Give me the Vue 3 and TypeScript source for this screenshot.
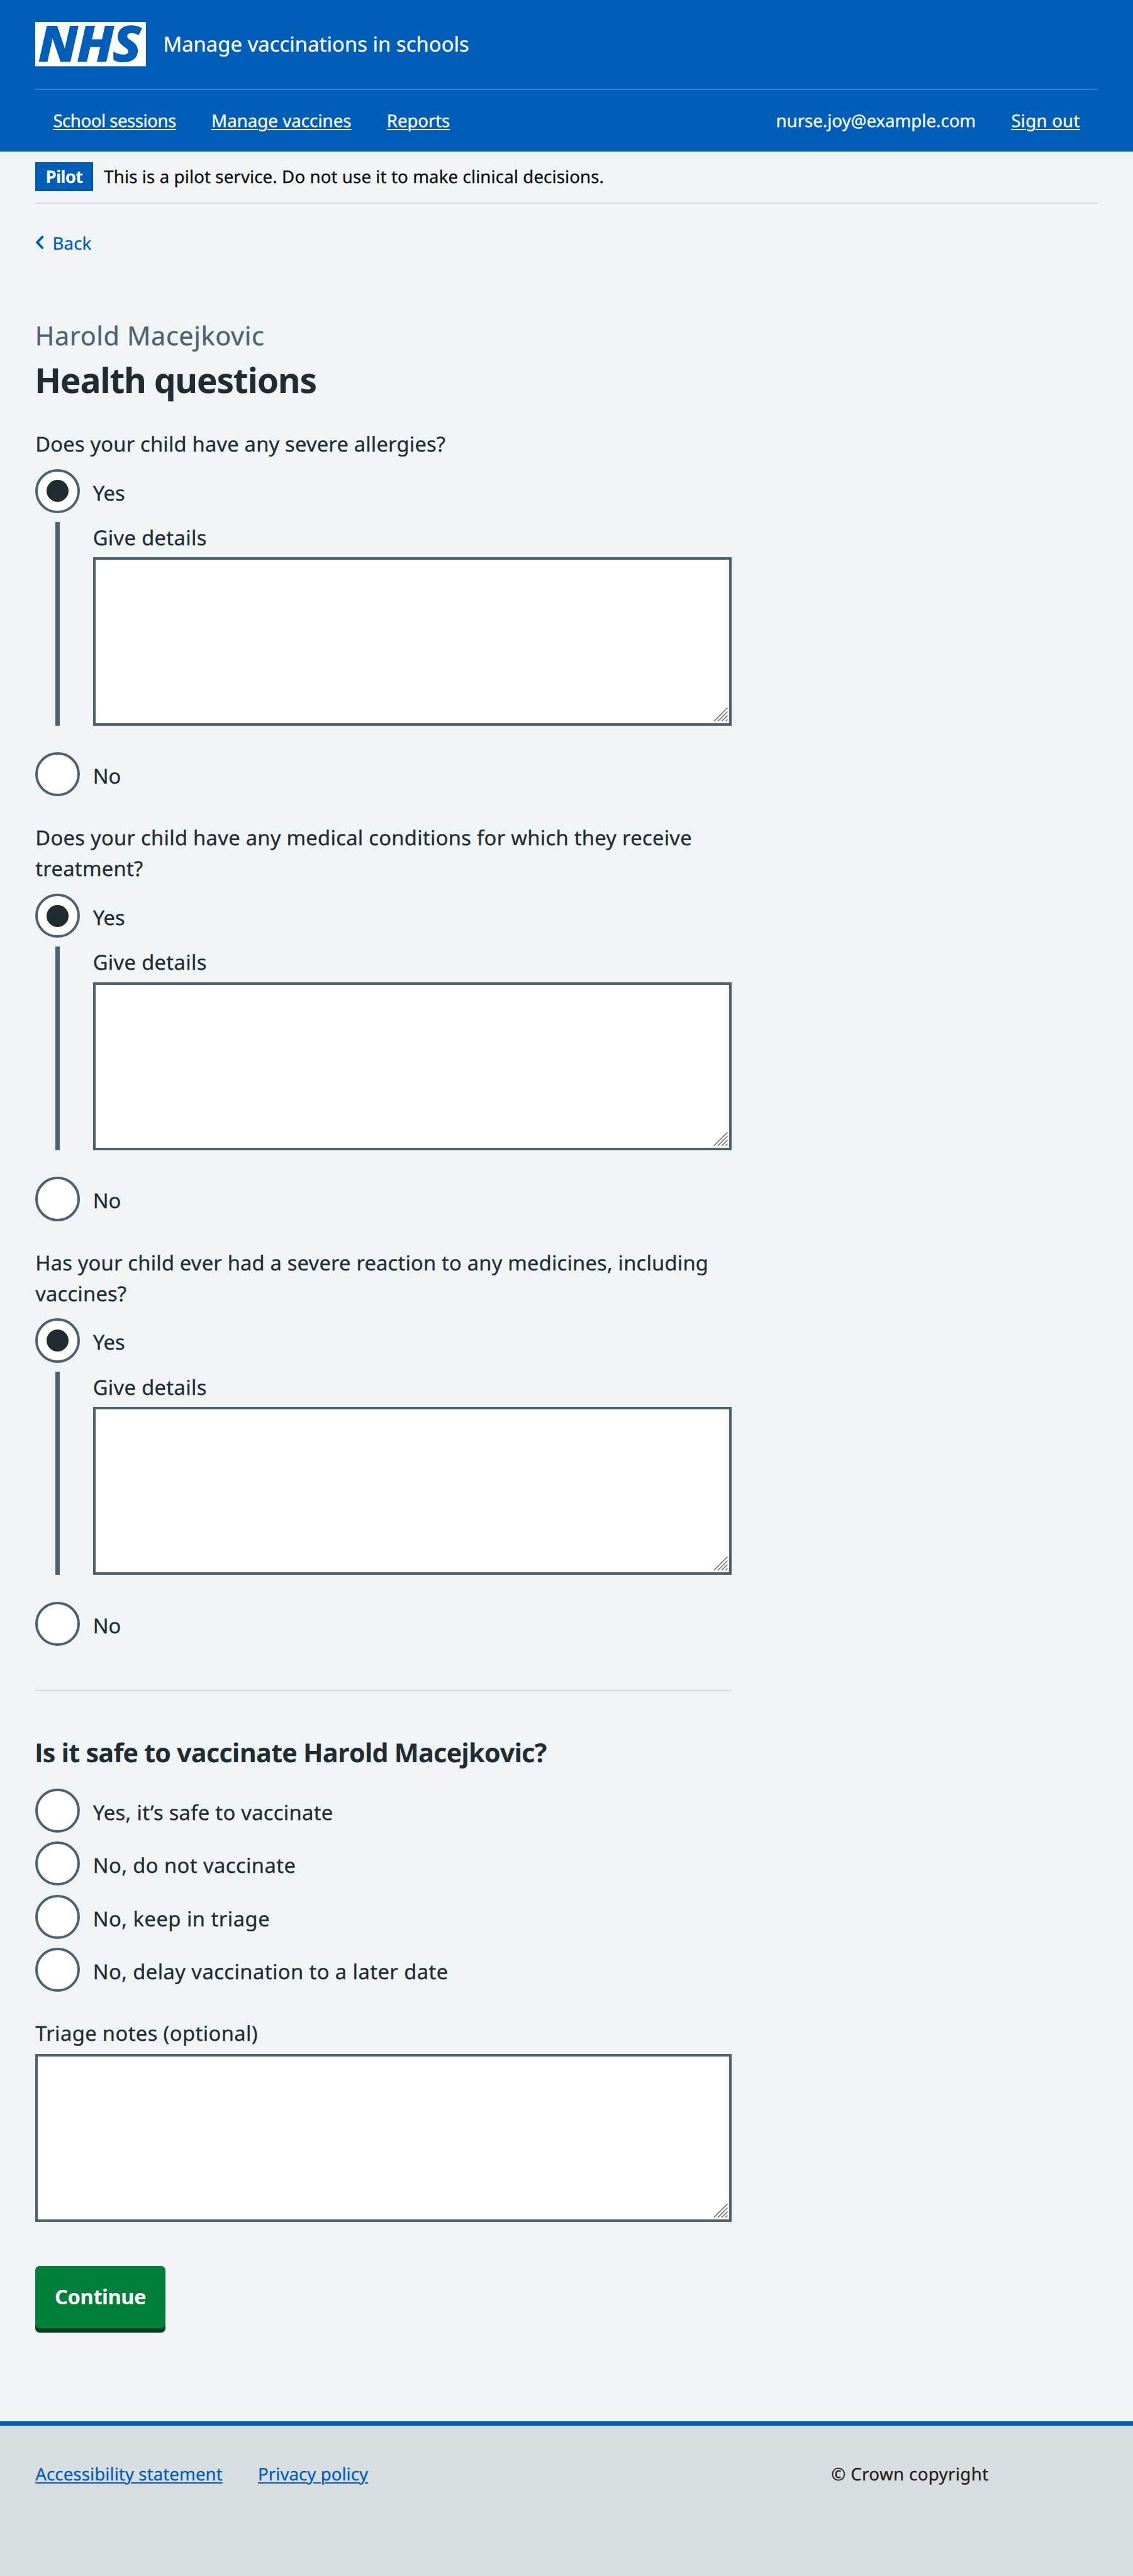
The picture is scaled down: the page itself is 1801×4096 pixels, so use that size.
<script setup lang="ts">
import { ref } from 'vue'

interface TextItem {
  text: string
  /** letter spacing in thousandths of a rem */
  tracking: number
}

interface Question {
  id: string
  lines: TextItem[]
}

const track = (n: number) => ({ letterSpacing: `${n / 1000}rem` })

const navLinks: TextItem[] = [
  { text: 'School sessions', tracking: -54 },
  { text: 'Manage vaccines', tracking: 5 },
  { text: 'Reports', tracking: -10 },
]

const questions: Question[] = [
  {
    id: 'allergies',
    lines: [{ text: 'Does your child have any severe allergies?', tracking: 21 }],
  },
  {
    id: 'conditions',
    lines: [
      { text: 'Does your child have any medical conditions for which they receive', tracking: 32 },
      { text: 'treatment?', tracking: 32 },
    ],
  },
  {
    id: 'reactions',
    lines: [
      { text: 'Has your child ever had a severe reaction to any medicines, including', tracking: 21 },
      { text: 'vaccines?', tracking: 21 },
    ],
  },
]

const outcomes: TextItem[] = [
  { text: 'Yes, it’s safe to vaccinate', tracking: 33 },
  { text: 'No, do not vaccinate', tracking: 48 },
  { text: 'No, keep in triage', tracking: 55 },
  { text: 'No, delay vaccination to a later date', tracking: 48 },
]

const footerLinks: TextItem[] = [
  { text: 'Accessibility statement', tracking: 10 },
  { text: 'Privacy policy', tracking: 5 },
]

const answers = ref<Record<string, string>>({
  allergies: 'yes',
  conditions: 'yes',
  reactions: 'yes',
})
</script>

<template>
  <div class="page">
    <header class="header">
      <div class="brand">
        <svg class="logo" viewBox="0 0 200 80" role="img" aria-label="NHS">
          <rect width="200" height="80" fill="#fff" />
          <text x="6" y="70.8" textLength="184" lengthAdjust="spacingAndGlyphs">NHS</text>
        </svg>
        <span class="service">Manage vaccinations in schools</span>
      </div>
      <nav class="nav">
        <div class="nav-group">
          <a v-for="l in navLinks" :key="l.text" href="#" :style="track(l.tracking)">{{ l.text }}</a>
        </div>
        <div class="nav-group">
          <span>nurse.joy@example.com</span>
          <a href="#" :style="track(27)">Sign out</a>
        </div>
      </nav>
    </header>

    <div class="banner">
      <strong class="tag"><span>Pilot</span></strong>
      <span class="banner-text">This is a pilot service. Do not use it to make clinical decisions.</span>
    </div>

    <a class="back" href="#">
      <svg viewBox="0 0 16 26" aria-hidden="true">
        <path d="M12.8 3.2 3.6 13l9.2 9.8" />
      </svg>
      <span>Back</span>
    </a>

    <main class="main">
      <span class="caption">Harold Macejkovic</span>
      <h1>Health questions</h1>

      <section v-for="q in questions" :key="q.id" class="question">
        <p class="legend">
          <span v-for="l in q.lines" :key="l.text" :style="track(l.tracking)">{{ l.text }}</span>
        </p>
        <div class="radio" @click="answers[q.id] = 'yes'">
          <span class="circle" :class="{ checked: answers[q.id] === 'yes' }"></span>
          <span class="radio-label">Yes</span>
        </div>
        <div v-if="answers[q.id] === 'yes'" class="conditional">
          <span class="field-label" :style="track(38)">Give details</span>
          <div class="textarea">
            <svg class="grip" viewBox="0 0 28 28" aria-hidden="true">
              <path d="M1 26 25.5 1.5M8 26 25.5 8.5M15 26 25.5 15.5M22 26l3.5-3.5" />
            </svg>
          </div>
        </div>
        <div class="radio" @click="answers[q.id] = 'no'">
          <span class="circle" :class="{ checked: answers[q.id] === 'no' }"></span>
          <span class="radio-label">No</span>
        </div>
      </section>

      <hr />

      <h2>Is it safe to vaccinate Harold Macejkovic?</h2>
      <div class="options">
        <div v-for="o in outcomes" :key="o.text" class="radio">
          <span class="circle"></span>
          <span class="radio-label" :style="track(o.tracking)">{{ o.text }}</span>
        </div>
      </div>

      <div class="notes">
        <span class="field-label" :style="track(44)">Triage notes (optional)</span>
        <div class="textarea">
          <svg class="grip" viewBox="0 0 28 28" aria-hidden="true">
            <path d="M1 26 25.5 1.5M8 26 25.5 8.5M15 26 25.5 15.5M22 26l3.5-3.5" />
          </svg>
        </div>
      </div>

      <button class="continue" type="button">Continue</button>
    </main>

    <footer class="footer">
      <div class="footer-links">
        <a v-for="l in footerLinks" :key="l.text" href="#" :style="track(l.tracking)">{{ l.text }}</a>
      </div>
      <span class="copyright">© Crown copyright</span>
    </footer>
  </div>
</template>

<style>
html {
  font-size: 8.7939px;
  background: #f0f4f5;
}
</style>

<style scoped>
.page,
.page * {
  box-sizing: border-box;
}
.page {
  display: flex;
  flex-direction: column;
  width: 100%;
  height: 465.8rem;
  overflow: hidden;
  background: #f0f4f5;
  color: #212b32;
  font-family: 'Noto Sans', 'Open Sans', sans-serif;
  font-size: 3.72rem;
  line-height: 5.6rem;
  text-rendering: geometricPrecision;
  -webkit-text-stroke: 0.3px currentColor;
}
.page > * {
  flex: none;
}
a {
  color: inherit;
  text-decoration: underline;
  text-decoration-thickness: 2px;
  text-underline-offset: 0.3rem;
}

.header {
  height: 27.4rem;
  padding: 0 6.4rem;
  background: #005eb8;
  color: #fff;
}
.brand {
  display: flex;
  align-items: center;
  gap: 3.1rem;
  height: 16rem;
}
.logo {
  display: block;
  width: 20rem;
  height: 8rem;
  overflow: visible;
}
.logo text {
  font-family: 'Open Sans', sans-serif;
  font-size: 87px;
  font-style: italic;
  font-weight: 700;
  fill: #005eb8;
  stroke: #005eb8;
  stroke-width: 3;
}
.service {
  padding-bottom: 0.24rem;
  letter-spacing: 0.01rem;
}
.nav {
  display: flex;
  align-items: center;
  justify-content: space-between;
  height: 11.4rem;
  padding: 0 3.2rem;
  border-top: 2px solid #337ec6;
  font-size: 3.14rem;
  line-height: 4.8rem;
}
.nav-group {
  display: flex;
  gap: 6.4rem;
}

.banner {
  display: flex;
  align-items: center;
  gap: 2rem;
  height: 9.4rem;
  margin: 0 6.4rem;
  border-bottom: 2px solid #d8dde0;
  color: #0b0c0c;
  font-size: 3.14rem;
  line-height: 4.8rem;
}
.tag {
  display: flex;
  align-items: center;
  justify-content: center;
  width: 10.4rem;
  height: 5.2rem;
  border: 2px solid #0054a6;
  background: #005eb8;
  color: #fff;
  font-weight: 700;
  letter-spacing: -0.09rem;
  -webkit-text-stroke: 0;
}
.banner-text {
  padding-bottom: 0.1rem;
  letter-spacing: 0.013rem;
}

.back {
  display: flex;
  align-items: center;
  align-self: flex-start;
  gap: 1.5rem;
  height: 4.8rem;
  margin: 4.68rem 0 0 6.4rem;
  color: #005eb8;
  font-size: 3.14rem;
  line-height: 4.8rem;
  letter-spacing: 0.01rem;
  text-decoration: none;
}
.back span {
  padding-top: 0.2rem;
}
.back svg {
  width: 1.6rem;
  height: 2.6rem;
}
.back path {
  fill: none;
  stroke: #005eb8;
  stroke-width: 4.4;
  stroke-linecap: round;
  stroke-linejoin: round;
}

.main {
  display: flex;
  flex-direction: column;
  width: 125.9rem;
  margin: 10.95rem 0 0 6.4rem;
}
.caption {
  height: 7.2rem;
  color: #4c6272;
  font-size: 4.7rem;
  line-height: 7.2rem;
  letter-spacing: 0.07rem;
  text-indent: -0.05rem;
}
h1 {
  margin: 0.42rem 0 -0.05rem;
  font-size: 6.27rem;
  line-height: 8rem;
  font-weight: 700;
  letter-spacing: -0.145rem;
  text-indent: -0.15rem;
  -webkit-text-stroke: 0;
}
.question {
  margin-top: 4.66rem;
}
.legend {
  margin: 0 0 1.74rem;
}
.legend span {
  display: block;
  white-space: nowrap;
}
.radio {
  display: flex;
  align-items: center;
  gap: 2.4rem;
  height: 8rem;
}
.circle {
  display: flex;
  align-items: center;
  justify-content: center;
  width: 8rem;
  height: 8rem;
  border: 4px solid #4c6272;
  border-radius: 50%;
  background: #fff;
}
.circle.checked::before {
  content: '';
  width: 4rem;
  height: 4rem;
  border-radius: 50%;
  background: #212b32;
}
.radio-label {
  padding-top: 0.6rem;
}
.conditional {
  height: 36.8rem;
  margin: 1.6rem 0 4.8rem 3.6rem;
  padding-left: 6rem;
  border-left: 7px solid #4c6272;
}
.field-label {
  display: block;
  margin-bottom: 0.94rem;
}
.conditional .field-label {
  margin-bottom: 0.8rem;
}
.textarea {
  display: flex;
  align-items: flex-end;
  justify-content: flex-end;
  height: 30.4rem;
  padding: 0.15rem 0.1rem;
  border: 4px solid #4c6272;
  background: #fff;
}
.grip {
  width: 2.8rem;
  height: 2.8rem;
}
.grip path {
  fill: none;
  stroke: #757575;
  stroke-width: 1.8;
}

hr {
  width: 100%;
  height: 2px;
  margin: 8rem 0 7.91rem;
  border: 0;
  background: #d8dde0;
}
h2 {
  margin: 0 0 3.26rem;
  font-family: 'Open Sans', sans-serif;
  font-size: 4.7rem;
  line-height: 6.4rem;
  font-weight: 700;
  letter-spacing: -0.09rem;
  text-indent: -0.15rem;
  white-space: nowrap;
  -webkit-text-stroke: 0;
}
.options {
  display: flex;
  flex-direction: column;
  gap: 1.6rem;
}
.notes {
  margin-top: 4.66rem;
}
.continue {
  align-self: flex-start;
  width: 23.5rem;
  height: 11.2rem;
  margin-top: 8rem;
  padding: 0 0 0.28rem;
  border: 0;
  border-radius: 0.8rem;
  background: #007f3b;
  box-shadow: 0 0.8rem 0 #00401e;
  color: #fff;
  font: inherit;
  font-weight: 700;
  letter-spacing: -0.053rem;
  -webkit-text-stroke: 0;
}

.footer {
  display: flex;
  justify-content: space-between;
  height: 28rem;
  margin-top: auto;
  padding: 6.36rem 26.1rem 0 6.4rem;
  border-top: 0.8rem solid #005eb8;
  background: #d8dde0;
  color: #231f20;
  font-size: 3.14rem;
  line-height: 4.8rem;
}
.footer-links {
  display: flex;
  gap: 6.4rem;
  color: #005eb8;
}
.copyright {
  letter-spacing: 0.044rem;
}
</style>
